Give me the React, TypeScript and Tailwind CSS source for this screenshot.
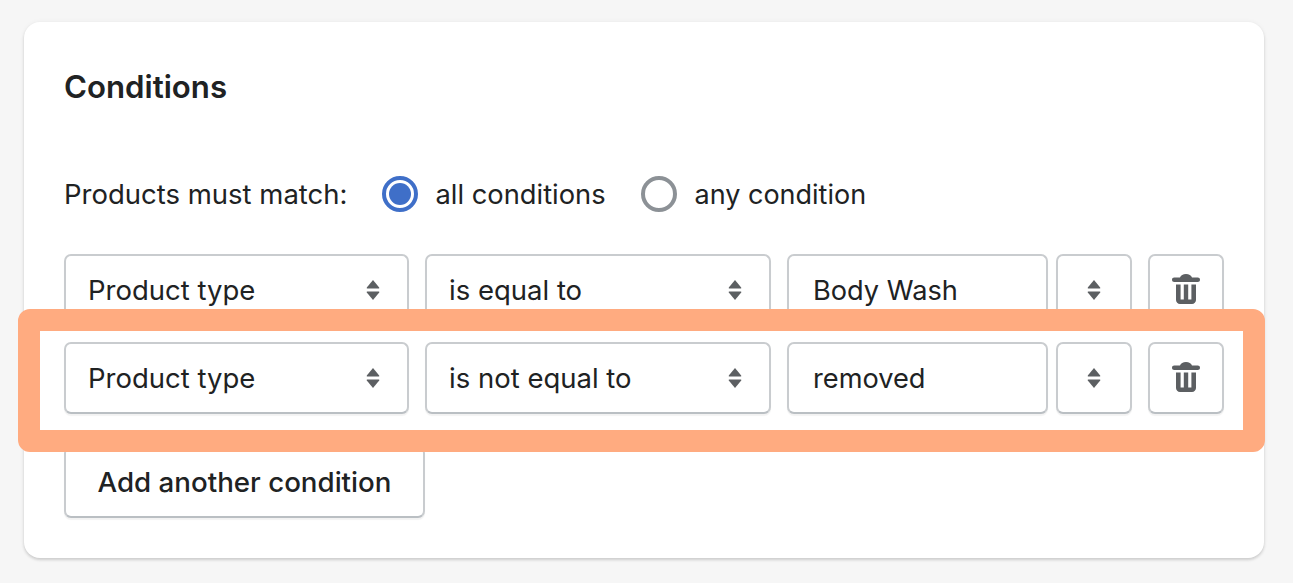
import React from "react";

const boxClass =
  "h-[72px] rounded-[7px] border-2 border-[#c9cccf] border-b-[#babfc3] bg-white shadow-[0_2px_1px_rgba(0,0,0,0.05)]";

function UpDown() {
  return (
    <svg width="14" height="20" viewBox="0 0 14 20" fill="#5c5f62" className="shrink-0">
      <path d="M7 0 L13.2 7.5 Q13.6 8.5 12.8 8.5 H1.2 Q0.4 8.5 0.8 7.5 Z" />
      <path d="M7 20 L13.2 12.5 Q13.6 11.5 12.8 11.5 H1.2 Q0.4 11.5 0.8 12.5 Z" />
    </svg>
  );
}

function Trash() {
  return (
    <svg width="28" height="30" viewBox="0 0 28 30" fill="#5c5f62" className="mb-0.5">
      <path d="M8 3.5 C8.8 1.3 11 0 14 0 C17 0 19.2 1.3 20 3.5 H25.8 C27 3.5 28 4.4 28 5.7 C28 7 27 8 25.8 8 H2.2 C1 8 0 7 0 5.7 C0 4.4 1 3.5 2.2 3.5 Z" />
      <path d="M4 10.5 H8.6 V25.5 H11.8 V10.5 H16.2 V25.5 H19.4 V10.5 H24 V26 C24 28.2 22.2 30 20 30 H8 C5.8 30 4 28.2 4 26 Z" />
    </svg>
  );
}

function Select({ label, className }: { label?: string; className: string }) {
  return (
    <div className={`${boxClass} ${className} flex items-center justify-between pl-[22px] pr-[27px]`}>
      {label && <span className="pt-0.5">{label}</span>}
      <UpDown />
    </div>
  );
}

function ConditionRow({ operator, value }: { operator: string; value: string }) {
  return (
    <div className="flex">
      <Select label="Product type" className="w-[345px]" />
      <Select label={operator} className="ml-4 w-[346px]" />
      <div className={`${boxClass} ml-4 flex w-[261px] items-center pt-0.5 pl-6 text-[27.2px]`}>{value}</div>
      <div className={`${boxClass} ml-2 flex w-[76px] items-center justify-center`}>
        <UpDown />
      </div>
      <div className={`${boxClass} ml-4 flex w-[76px] items-center justify-center`}>
        <Trash />
      </div>
    </div>
  );
}

export default function App() {
  return (
    <div className="h-[583px] w-[1293px] overflow-hidden bg-[#f6f6f6] pt-[22px] pl-6 font-['Inter',sans-serif] text-[27.5px] text-[#202223]">
      <div className="relative h-[536px] w-[1240px] rounded-[16px] bg-white px-10 shadow-[0_0_5px_rgba(23,24,24,0.05),0_2px_3px_rgba(0,0,0,0.15)]">
        <h2 className="pt-[45px] text-[31.2px] leading-10 font-semibold">Conditions</h2>

        <div className="mt-[67px] flex h-10 items-center">
          <span className="pt-0.5">Products must match:</span>
          <span className="ml-[34px] flex size-9 items-center justify-center rounded-full border-[4px] border-[#3f6fc8]">
            <span className="size-[22px] rounded-full bg-[#3f6fc8]" />
          </span>
          <span className="ml-[18px] w-[171px] whitespace-nowrap pt-0.5 text-[27.3px]">all conditions</span>
          <span className="ml-[34px] size-9 rounded-full border-[4px] border-[#8c9196]" />
          <span className="ml-[18px] pt-0.5 text-[27px]">any condition</span>
        </div>

        <div className="mt-10 flex flex-col gap-4">
          <ConditionRow operator="is equal to" value="Body Wash" />
          <ConditionRow operator="is not equal to" value="removed" />
          <button className={`${boxClass} mt-4 w-[361px] pt-0.5 text-center text-[27.7px] font-medium`}>
            Add another condition
          </button>
        </div>

        <div className="absolute top-[287px] -left-[6px] h-[143px] w-[1247px] rounded-[12px] border-[22px] border-[#ffab80]" />
      </div>
    </div>
  );
}
